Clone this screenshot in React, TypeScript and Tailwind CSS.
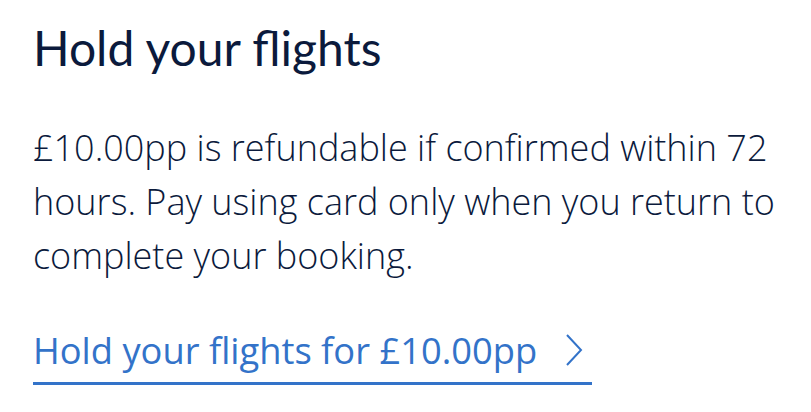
export default function App() {
  return (
    <div className="w-[811px] h-[412px] bg-white pl-[33px] pt-[20px] overflow-hidden">
      <h2 className="font-['Lato',sans-serif] text-[48px] leading-[56px] text-[#0b1a3c] font-normal">
        Hold your flights
      </h2>
      <p className="mt-[45px] w-[770px] font-['Open_Sans',sans-serif] text-[36px] leading-[54px] font-light text-[#0b1a3c]">
        £10.00pp is refundable if confirmed within 72 hours. Pay using card only when you return to complete your booking.
      </p>
      <a
        href="#"
        className="mt-[45px] inline-flex items-center gap-[28px] border-b-[3px] border-[#3373c9] pb-[10px] pr-[9px] font-['Open_Sans',sans-serif] text-[36.3px] leading-[44px] text-[#3373c9]"
      >
        <span>Hold your flights for £10.00pp</span>
        <svg width="18" height="32" viewBox="0 0 18 32" fill="none" stroke="currentColor" strokeWidth="2">
          <path d="M2 1 L16 16 L2 31" />
        </svg>
      </a>
    </div>
  )
}
